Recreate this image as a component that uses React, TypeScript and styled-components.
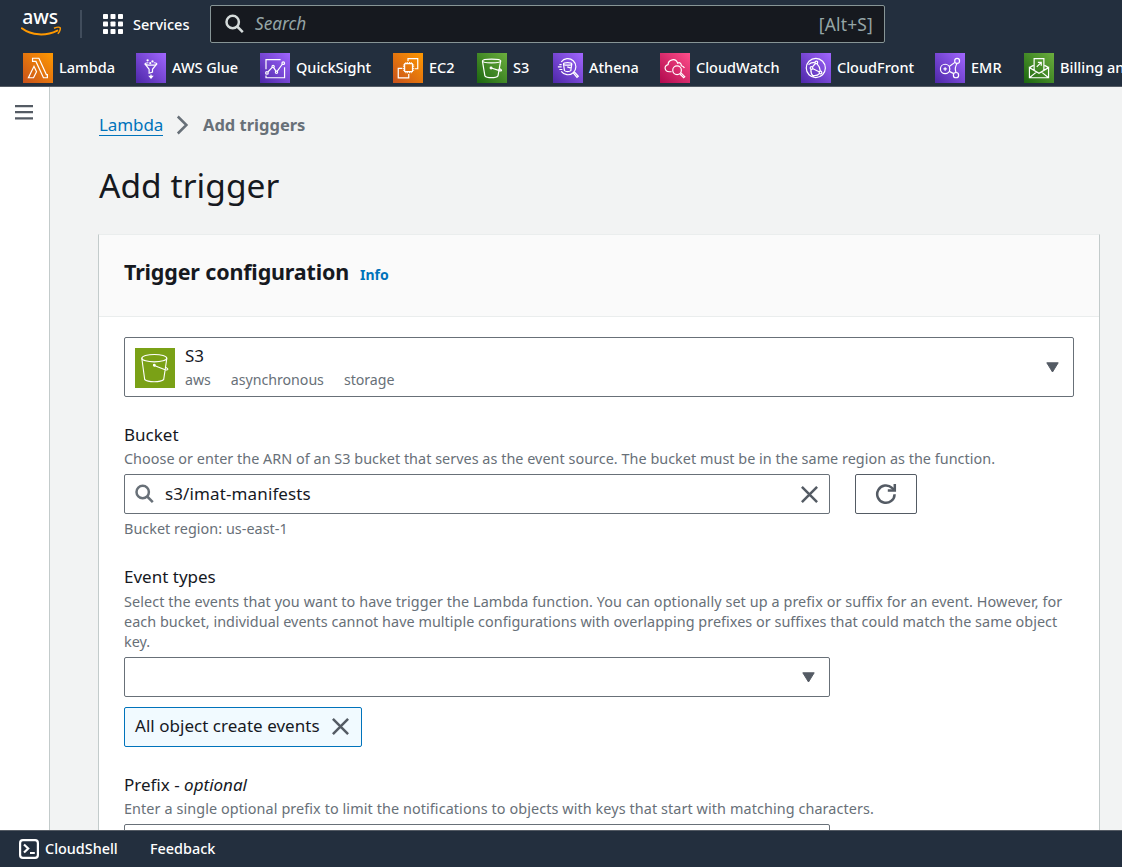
import React from "react";
import styled, { createGlobalStyle, css } from "styled-components";

const GlobalStyle = createGlobalStyle`
  *, *::before, *::after { box-sizing: border-box; }
  html, body { margin: 0; padding: 0; height: 100%; overflow: hidden; }
  body {
    font-family: "Noto Sans", "Open Sans", sans-serif;
    font-size: 17px;
    line-height: 22px;
    color: #16191f;
    background: #f2f3f3;
  }
  h1, h2, p { margin: 0; font-weight: 400; }
  button { font: inherit; color: inherit; }
  svg { display: block; flex: none; }
`;

const Shell = styled.div`
  display: flex;
  flex-direction: column;
  width: 1122px;
  height: 867px;
  overflow: hidden;
`;

const TopNav = styled.header`
  flex: none;
  height: 87px;
  background: #232f3e;
  border-bottom: 1px solid #545b64;
  color: #fff;
`;

const NavMain = styled.div`
  display: flex;
  align-items: center;
  height: 48px;
  padding-left: 21px;
`;

const NavDivider = styled.span`
  width: 2px;
  height: 28px;
  margin: 0 21px 0 18px;
  background: #414d5c;
`;

const ServicesButton = styled.button`
  display: flex;
  align-items: center;
  gap: 10px;
  width: 107px;
  padding: 0;
  border: 0;
  background: none;
  font-size: 14.5px;
  font-weight: 500;
  white-space: nowrap;
`;

const SearchBox = styled.div`
  display: flex;
  align-items: center;
  width: 675px;
  height: 38px;
  padding: 0 11px 0 14px;
  border: 1px solid #879596;
  border-radius: 2px;
  background: #16191f;
  color: #95a5a6;
`;

const SearchPlaceholder = styled.span`
  flex: 1;
  margin-left: 10px;
  padding-bottom: 1px;
  font-size: 17.2px;
  font-style: italic;
`;

const Shortcut = styled.span`
  padding-bottom: 1px;
  font-size: 17.4px;
  letter-spacing: 0.2px;
`;

const Favorites = styled.nav`
  display: flex;
  height: 38px;
  padding: 5px 0 0 23px;
`;

const Favorite = styled.a<{ $width: number }>`
  display: flex;
  flex: none;
  align-items: center;
  gap: 6px;
  width: ${(p) => p.$width}px;
  height: 30px;
  font-size: 14.5px;
  font-weight: 500;
  white-space: nowrap;
`;

const FavoriteName = styled.span`
  padding-bottom: 2px;
`;

const Body = styled.div`
  display: flex;
  flex: 1;
  min-height: 0;
`;

const SideRail = styled.aside`
  flex: none;
  width: 50px;
  padding: 18px 0 0 15px;
  background: #fff;
  border-right: 1px solid #c3cbcb;
`;

const Main = styled.main`
  flex: 1;
  padding: 27px 22px 0 48px;
  overflow: hidden;
`;

const Breadcrumbs = styled.nav`
  display: flex;
  align-items: center;
  height: 22px;
  padding-left: 1px;
`;

const CrumbLink = styled.a`
  width: 64px;
  height: 22px;
  border-bottom: 1px solid #0073bb;
  color: #0073bb;
  letter-spacing: -0.1px;
  white-space: nowrap;
`;

const CrumbCurrent = styled.span`
  color: #687078;
  font-weight: 700;
  font-size: 16.5px;
`;

const PageTitle = styled.h1`
  margin-top: 25px;
  padding-left: 1px;
  font-size: 33.5px;
  line-height: 48px;
  letter-spacing: 0.05px;
`;

const Card = styled.section`
  width: 1002px;
  height: 700px;
  margin-top: 25px;
  background: #fff;
  border: 1px solid #c3cbcb;
  border-top-color: #eaeded;
`;

const CardHeader = styled.div`
  display: flex;
  align-items: baseline;
  gap: 11px;
  height: 82px;
  padding: 22px 25px 0;
  background: #fafafa;
  border-bottom: 1px solid #eaeded;
`;

const CardTitle = styled.h2`
  font-size: 21.5px;
  line-height: 30px;
  font-weight: 700;
  letter-spacing: -0.17px;
`;

const InfoLink = styled.a`
  color: #0073bb;
  font-size: 14px;
  font-weight: 700;
`;

const Form = styled.div`
  padding: 20px 25px 0 25px;
`;

const Field = styled.div<{ $top: number }>`
  margin-top: ${(p) => p.$top}px;
`;

const Label = styled.div`
  height: 22px;
`;

const Hint = styled.p<{ $top?: number; $tracking?: number }>`
  margin-top: ${(p) => p.$top ?? 3}px;
  color: #687078;
  font-size: 14.4px;
  line-height: 20px;
  letter-spacing: ${(p) => p.$tracking ?? 0.03}px;
  white-space: nowrap;
`;

const HintLine = styled.span<{ $tracking: number }>`
  display: block;
  letter-spacing: ${(p) => p.$tracking}px;
`;

const boxed = css`
  display: flex;
  align-items: center;
  background: #fff;
  border: 1px solid #687078;
  border-radius: 2px;
`;

const SourceSelect = styled.div`
  ${boxed}
  height: 60px;
  padding: 0 14px 0 10px;
`;

const SourceText = styled.div`
  flex: 1;
  margin-left: 10px;
  padding-top: 1px;
`;

const SourceName = styled.div`
  height: 25px;
  line-height: 22px;
`;

const Tags = styled.div`
  display: flex;
  gap: 20px;
  color: #687078;
  font-size: 14.2px;
  line-height: 20px;
  letter-spacing: -0.03px;
`;

const InputRow = styled.div`
  display: flex;
  gap: 25px;
  margin-top: 5px;
`;

const Input = styled.div<{ $right?: number }>`
  ${boxed}
  width: 706px;
  height: 40px;
  padding: 0 ${(p) => p.$right ?? 11}px 0 10px;
`;

const InputValue = styled.span`
  flex: 1;
  margin-left: 10px;
  letter-spacing: 0.12px;
`;

const IconButton = styled.button`
  ${boxed}
  justify-content: center;
  width: 62px;
  height: 40px;
  padding: 0;
  border-color: #545b64;
`;

const Token = styled.div`
  ${boxed}
  justify-content: space-between;
  width: 238px;
  height: 40px;
  margin-top: 10px;
  padding: 0 12px 2px 10px;
  background: #f1faff;
  border-color: #0073bb;
  letter-spacing: 0.03px;
  white-space: nowrap;
`;

const Footer = styled.footer`
  display: flex;
  flex: none;
  align-items: center;
  height: 37px;
  padding: 0 0 0 19px;
  background: #232f3e;
  border-top: 1px solid #545b64;
  color: #fff;
  font-size: 14.4px;
  font-weight: 500;
`;

const CloudShellLink = styled.a`
  display: flex;
  align-items: center;
  gap: 6px;
  width: 131px;
`;

const AwsLogo = () => (
  <svg width="41" height="28" viewBox="0 0 41 28">
    <text x="1.2" y="14" fill="#fff" fontFamily="Noto Sans, sans-serif" fontSize="19" fontWeight="500" textLength="36" lengthAdjust="spacingAndGlyphs">aws</text>
    <path d="M0.8 18.300c10 7.400 24 8 35.500 2.300" fill="none" stroke="#f90" strokeWidth="2" strokeLinecap="round" />
    <path d="M33 18.200c3-1.200 5.500-1.200 6.200-.4.500.9-.5 4-2.400 6" fill="none" stroke="#f90" strokeWidth="1.5" />
  </svg>
);

const GridIcon = () => (
  <svg width="20" height="20" viewBox="0 0 20 20" fill="#fff">
    {[0, 7.5, 15].map((y) => [0, 7.5, 15].map((x) => <rect key={`${x}-${y}`} x={x} y={y} width="5" height="5" rx="0.8" />))}
  </svg>
);

const SearchIcon = ({ color }: { color: string }) => (
  <svg width="20" height="20" viewBox="0 0 20 20" fill="none" stroke={color} strokeWidth="2.5">
    <circle cx="7.700" cy="8" r="6.200" />
    <path d="M12.200 12.500l5.600 5.600" />
  </svg>
);

const MenuIcon = () => (
  <svg width="18" height="16" viewBox="0 0 18 16" fill="#545b64">
    <path d="M0 0h18v2.200H0zM0 6h18v2.200H0zM0 12.300h18v2.200H0z" />
  </svg>
);

const ChevronIcon = () => (
  <svg width="40" height="20" viewBox="0 0 40 20" fill="none" stroke="#687078" strokeWidth="2.5">
    <path d="M14.800 1.500l8.600 8.500-8.600 8.500" />
  </svg>
);

const CaretIcon = () => (
  <svg width="13" height="11" viewBox="0 0 13 11" fill="#545b64" stroke="#545b64" strokeLinejoin="round">
    <path d="M.8.800h11.400L6.500 10z" />
  </svg>
);

const CloseIcon = () => (
  <svg width="17" height="17" viewBox="0 0 17 17" stroke="#545b64" strokeWidth="2.500">
    <path d="M.9.900l15.200 15.200M16.100.900L.9 16.100" />
  </svg>
);

const RefreshIcon = () => (
  <svg width="22" height="22" viewBox="0 0 22 22" fill="none" stroke="#545b64" strokeWidth="2.500">
    <path d="M19.600 11.200a8.700 8.700 0 1 1-2.600-6.300l2.200 2" />
    <path d="M19.800 1v6.600h-7" />
  </svg>
);

const ShellIcon = () => (
  <svg width="20" height="20" viewBox="0 0 20 20" fill="none" stroke="#fff" strokeWidth="2.2">
    <rect x="1.100" y="1.100" width="17.800" height="17.800" rx="2.800" />
    <path d="M5 5.500l4.200 4-4.200 4M11 14h4.800" />
  </svg>
);

type IconKind = "compute" | "analytics" | "storage" | "management";

const gradients: Record<IconKind, [string, string]> = {
  compute: ["#c8511b", "#ff9900"],
  analytics: ["#4d27a8", "#a166ff"],
  storage: ["#1b660f", "#6cae3e"],
  management: ["#b0084d", "#ff4f8b"],
};

const Tile = styled.span<{ $kind: IconKind }>`
  flex: none;
  width: 30px;
  height: 30px;
  background: linear-gradient(45deg, ${(p) => gradients[p.$kind][0]}, ${(p) => gradients[p.$kind][1]});
`;

const Glyph = ({ children }: { children: React.ReactNode }) => (
  <svg width="30" height="30" viewBox="0 0 80 80" fill="none" stroke="#fff" strokeWidth="3.2">
    {children}
  </svg>
);

const services: { name: string; kind: IconKind; width: number; glyph: React.ReactNode }[] = [
  {
    name: "Lambda", kind: "compute", width: 113,
    glyph: <><path d="M28 66H14.500L29.300 35.500 36 50z" /><path d="M65 66H54.500L34.500 22.500H25.500V14H42.400L62.300 57.500H65z" /></>,
  },
  {
    name: "AWS Glue", kind: "analytics", width: 124,
    glyph: <><path d="M33 26c-6 .5-9 1.500-9 3s7 3.500 16 3.500 15.500-2 15.500-3.500-3-2.500-8-3" /><path d="M24 29L35 43.500V54l9-3v-7.500L55.500 29M40 57v8" /><path d="M36 62h8l-4 5z" fill="#fff" /><circle cx="31" cy="19.500" r="1.500" /><circle cx="44" cy="22.500" r="1.500" /><circle cx="38" cy="27" r="1.200" /></>,
  },
  {
    name: "QuickSight", kind: "analytics", width: 133,
    glyph: <><path d="M16 43V17.500H55M65.500 38V66H16V60" /><circle cx="18.500" cy="53" r="3.500" /><circle cx="35" cy="36" r="3" /><circle cx="44" cy="51.500" r="3" /><circle cx="62" cy="27" r="3.500" /><path d="M21.500 50L32.500 38.500M36.500 39L42.500 48.500M46 48.500L59.500 30" /></>,
  },
  {
    name: "EC2", kind: "compute", width: 84,
    glyph: <><rect x="31" y="28.500" width="21" height="21" rx="1" /><path d="M40 22V15H66V42H58M25 41H14V66.500H42V56" /><path strokeWidth="2.400" d="M34.500 24v4M39 24v4M44 24v4M48.500 24v4M34.500 50v4M39 50v4M44 50v4M48.500 50v4M26.500 32h4M26.500 36.500h4M26.500 41.500h4M26.500 46h4M52.500 32h4M52.500 36.500h4M52.500 41.500h4M52.500 46h4" /></>,
  },
  {
    name: "S3", kind: "storage", width: 76,
    glyph: <><ellipse cx="39" cy="21.500" rx="24.500" ry="5" /><path d="M14.500 21.500L21 61c5 6.500 30 6.500 35 0l7-39.500M38 40l22 7c8 2 6-2 1-5" /><circle cx="37.500" cy="40" r="2.300" /></>,
  },
  {
    name: "Athena", kind: "analytics", width: 107,
    glyph: <><path d="M22 24a21.500 21.500 0 1 1 0 25M13 37h10M17 44h8M17 31h6" /><ellipse cx="39" cy="29" rx="11" ry="3.500" /><path d="M28 29l2.500 18c4 3.500 13 3.500 17 0L50 29M38 37l12 4" /><path d="M54 53l10 12 3.500-3-11-12" /></>,
  },
  {
    name: "CloudWatch", kind: "management", width: 141,
    glyph: <><path d="M31 50H25C11 49 10 34 21.500 31 22 17 42 12 47 27c6-3 10 1 10 7 4 1 7 3 8 6" /><circle cx="45.500" cy="46" r="11.500" /><path d="M53 56l10 10 3-3-10-10" /></>,
  },
  {
    name: "CloudFront", kind: "analytics", width: 134,
    glyph: <><circle cx="39.500" cy="40" r="25.500" /><circle cx="41" cy="25" r="3.500" /><circle cx="28" cy="40" r="3.500" /><circle cx="52" cy="52" r="3.500" /><path d="M38.500 28l-8 9M32 42l16 8M43 29c6 6 8 11 8.500 19M26.500 44c-1 7 2 14 7 20M37 25c-8 0-13 2-17 6M49 55c-4 5-10 6-17 5" /></>,
  },
  {
    name: "EMR", kind: "analytics", width: 89,
    glyph: <><circle cx="27" cy="42.500" r="12.500" /><path d="M27 38v9M22.500 42.500h9M38 36l15-11M38 49l12 6M59 28c-5 7-6 16-3 24" /><circle cx="59" cy="21" r="6.500" /><circle cx="56" cy="59" r="7" /></>,
  },
  {
    name: "Billing and Cost Management", kind: "storage", width: 240,
    glyph: <><path d="M27 46V15H53V46M14.500 39L25 33M55 33l10.500 6M14.500 39V66H65.500V39L40 54zM14.500 66L33 51M65.500 66L47 51" /><path d="M34 37L46 25M37 25h9V34" /></>,
  },
];

const BucketTile = styled.span`
  flex: none;
  width: 40px;
  height: 40px;
  margin-top: 2px;
  background: #7aa116;
`;

export default function App() {
  return (
    <Shell>
      <GlobalStyle />
      <TopNav>
        <NavMain>
          <AwsLogo />
          <NavDivider />
          <ServicesButton><GridIcon />Services</ServicesButton>
          <SearchBox>
            <SearchIcon color="#d5dbdb" />
            <SearchPlaceholder>Search</SearchPlaceholder>
            <Shortcut>[Alt+S]</Shortcut>
          </SearchBox>
        </NavMain>
        <Favorites>
          {services.map((s) => (
            <Favorite key={s.name} $width={s.width}>
              <Tile $kind={s.kind}><Glyph>{s.glyph}</Glyph></Tile>
              <FavoriteName>{s.name}</FavoriteName>
            </Favorite>
          ))}
        </Favorites>
      </TopNav>
      <Body>
        <SideRail><MenuIcon /></SideRail>
        <Main>
          <Breadcrumbs>
            <CrumbLink>Lambda</CrumbLink>
            <ChevronIcon />
            <CrumbCurrent>Add triggers</CrumbCurrent>
          </Breadcrumbs>
          <PageTitle>Add trigger</PageTitle>
          <Card>
            <CardHeader>
              <CardTitle>Trigger configuration</CardTitle>
              <InfoLink>Info</InfoLink>
            </CardHeader>
            <Form>
              <SourceSelect>
                <BucketTile>
                  <svg width="40" height="40" viewBox="0 0 40 40" fill="none" stroke="#fff" strokeWidth="1.1">
                    <ellipse cx="19.300" cy="10.200" rx="12.500" ry="3.700" />
                    <path d="M6.800 10.300L9.700 31.500c3 3 16 3 19 0l3.100-21.200M19.300 17.500l9.500 3.800c4.500 1.500 5.500-.2 1.700-2" />
                    <circle cx="19.300" cy="17.300" r="0.900" fill="#fff" />
                  </svg>
                </BucketTile>
                <SourceText>
                  <SourceName>S3</SourceName>
                  <Tags><span>aws</span><span>asynchronous</span><span>storage</span></Tags>
                </SourceText>
                <CaretIcon />
              </SourceSelect>

              <Field $top={27}>
                <Label>Bucket</Label>
                <Hint>Choose or enter the ARN of an S3 bucket that serves as the event source. The bucket must be in the same region as the function.</Hint>
                <InputRow>
                  <Input>
                    <SearchIcon color="#687078" />
                    <InputValue>s3/imat-manifests</InputValue>
                    <CloseIcon />
                  </Input>
                  <IconButton aria-label="Refresh"><RefreshIcon /></IconButton>
                </InputRow>
                <Hint $top={5}>Bucket region: us-east-1</Hint>
              </Field>

              <Field $top={27}>
                <Label>Event types</Label>
                <Hint $top={4}>
                  <HintLine $tracking={0.084}>Select the events that you want to have trigger the Lambda function. You can optionally set up a prefix or suffix for an event. However, for</HintLine>
                  <HintLine $tracking={0.034}>each bucket, individual events cannot have multiple configurations with overlapping prefixes or suffixes that could match the same object</HintLine>
                  <HintLine $tracking={0}>key.</HintLine>
                </Hint>
                <InputRow>
                  <Input $right={14}><InputValue /><CaretIcon /></Input>
                </InputRow>
                <Token>All object create events<CloseIcon /></Token>
              </Field>

              <Field $top={27}>
                <Label>Prefix - <em>optional</em></Label>
                <Hint $tracking={0.09}>Enter a single optional prefix to limit the notifications to objects with keys that start with matching characters.</Hint>
                <InputRow><Input /></InputRow>
              </Field>
            </Form>
          </Card>
        </Main>
      </Body>
      <Footer>
        <CloudShellLink><ShellIcon />CloudShell</CloudShellLink>
        <a>Feedback</a>
      </Footer>
    </Shell>
  );
}
